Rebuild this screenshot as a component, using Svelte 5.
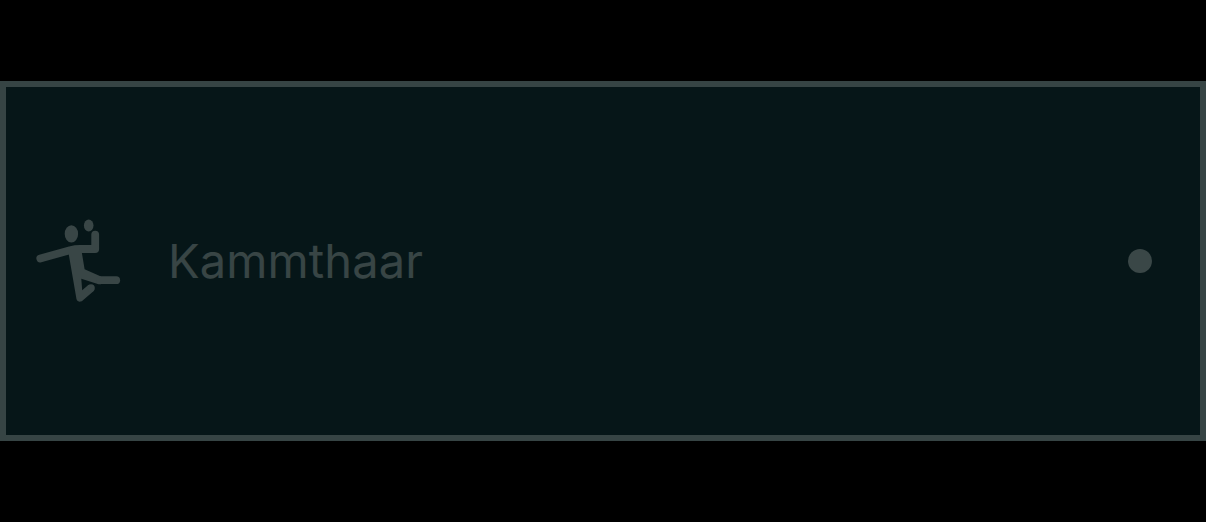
<script>
  const name = 'Kammthaar';
</script>

<main>
  <section class="row">
    <svg class="sport" viewBox="30 212 100 96" aria-hidden="true">
      <ellipse cx="71.4" cy="233.9" rx="6.7" ry="8.6" />
      <ellipse cx="88.7" cy="225.5" rx="4.8" ry="6" />
      <path class="limb" d="M40.3 258.4 L70 250.2 Q75 249 80 249 H95.2 V234.6" />
      <path d="M68 250 H81.4 L84.6 269.3 L101 276.4 V284.2 H98.5 L81.3 278.8 L82.2 290.3 L88.6 284.8 L94 290.8 L81.8 301.2 Q77.6 302.8 76.5 299.2 Z" />
      <path class="leg" d="M100 280.2 H116.2" />
      <circle cx="91" cy="288" r="3.8" />
    </svg>
    <span class="name">{name}</span>
    <span class="dot"></span>
  </section>
</main>

<style>
  :global(body) {
    margin: 0;
    background: #000;
  }
  main {
    height: 522px;
    box-sizing: border-box;
    padding-top: 81px;
    background: #000;
  }
  .row {
    box-sizing: border-box;
    height: 360px;
    border: 6px solid #364444;
    background: #061618;
    display: flex;
    align-items: center;
    padding: 0 48px 0 24px;
  }
  .sport {
    width: 100px;
    height: 96px;
    margin-top: -2px;
    fill: #394646;
  }
  .limb,
  .leg {
    fill: none;
    stroke: #394646;
    stroke-width: 7.8;
    stroke-linecap: round;
    stroke-linejoin: round;
  }
  .name {
    flex: 1;
    margin-left: 38px;
    color: #384545;
    font-family: Inter, sans-serif;
    font-size: 47px;
    line-height: 60px;
    letter-spacing: 0.12px;
    padding-bottom: 1px;
    -webkit-text-stroke: 0.15px #384545;
  }
  .dot {
    width: 24.5px;
    height: 24.5px;
    border-radius: 50%;
    background: #3a4747;
  }
</style>
